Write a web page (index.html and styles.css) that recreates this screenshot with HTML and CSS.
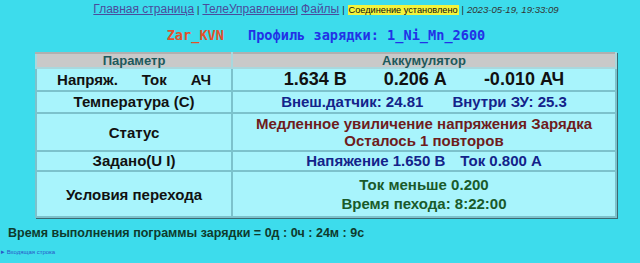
FILE: index.html
```html
<!DOCTYPE html>
<html lang="ru">
<head>
<meta charset="utf-8">
<title>Zar_KVN</title>
<link rel="stylesheet" href="styles.css">
</head>
<body>
<div class="center">
  <div class="nav">
    <a href="#">Главная страница</a><span class="sep">|</span><a href="#">ТелеУправление</a><span class="sep sep-tight">|</span><a href="#">Файлы</a><span class="sep">|</span><span class="status-badge">Соединение установлено</span><span class="sep">|</span><span class="date">2023-05-19, 19:33:09</span>
  </div>
  <div class="title"><span class="dev">Zar_KVN</span><span class="profile">Профиль зарядки: 1_Ni_Mn_2600</span></div>
  <table class="tbl">
    <tr class="head"><th class="c1">Параметр</th><th>Аккумулятор</th></tr>
    <tr class="r1"><td class="lbl"><span class="trio"><span>Напряж.</span><span>Ток</span><span>АЧ</span></span></td><td class="big"><span class="trio wide"><span>1.634 В</span><span>0.206 А</span><span>-0.010 АЧ</span></span></td></tr>
    <tr class="r2"><td class="lbl">Температура (С)</td><td class="navy"><span class="trio mid"><span>Внеш.датчик: 24.81</span><span>Внутри ЗУ: 25.3</span></span></td></tr>
    <tr class="r3"><td class="lbl">Статус</td><td class="red">Медленное увиличение напряжения Зарядка<br>Осталось 1 повторов</td></tr>
    <tr class="r4"><td class="lbl">Задано(U I)</td><td class="navy"><span class="trio small"><span>Напяжение 1.650 В</span><span>Ток 0.800 А</span></span></td></tr>
    <tr class="r5"><td class="lbl">Условия перехода</td><td class="green">Ток меньше 0.200<br>Время пехода: 8:22:00</td></tr>
  </table>
</div>
<div class="runtime">Время выполнения пограммы зарядки = 0д : 0ч : 24м : 9с</div>
<div class="incoming"><span class="tri">&#9656;</span> Входящая строка</div>
</body>
</html>
```
FILE: styles.css
```css
html, body {
  margin: 0;
  padding: 0;
  background: #3ddcec;
  font-family: "Liberation Sans", Arial, sans-serif;
}
body {
  width: 640px;
  height: 263px;
  overflow: hidden;
}
.center {
  padding-left: 12px;
  display: flex;
  flex-direction: column;
  align-items: center;
}
.nav {
  margin-top: 1px;
  height: 16px;
  line-height: 16px;
  font-size: 12px;
  color: #222;
  white-space: nowrap;
}
.nav a {
  color: #4a4c9c;
  text-decoration: underline;
}
.sep {
  font-size: 9px;
  margin: 0 3px;
  color: #222;
}
.sep-tight { margin-left: 0; }
.status-badge {
  font-size: 9.2px;
  background: #f4f43c;
  color: #111;
  padding: 0 1px;
}
.date {
  font-size: 9.6px;
  font-style: italic;
  color: #333;
}
.title {
  margin-top: 9px;
  height: 22px;
  line-height: 18px;
  font-family: "DejaVu Sans Mono", "Liberation Mono", monospace;
  font-size: 13.6px;
  font-weight: bold;
  white-space: nowrap;
}
.dev { color: #e2502a; margin-right: 24px; }
.profile { color: #2232e6; }
.tbl {
  margin-top: 4px;
  width: 582px;
  border-collapse: collapse;
  border: 2px solid #5e9098;
  box-shadow: 1px 1px 0 #3a6a72;
}
.tbl th, .tbl td {
  border: 2px solid #7cc2cc;
  padding: 0 2px;
  text-align: center;
  font-weight: bold;
}
.tbl th {
  background: #c9c9c9;
  color: #1e5a5c;
  font-size: 13px;
  height: 13px;
  line-height: 13px;
  border-color: #a8d8de;
  border-top: 2px solid #b0b0b0;
}
.tbl th.c1 { width: 190px; }
.tbl td {
  background: #a8f4fc;
  font-size: 15px;
  color: #111;
}
.r1 td { height: 21px; line-height: 21px; }
.r2 td { height: 20px; line-height: 20px; }
.r3 td { height: 36px; line-height: 17px; }
.r4 td { height: 18px; line-height: 18px; }
.r5 td { height: 44px; line-height: 19px; }
.lbl { color: #111; }
.big { font-size: 18px !important; }
.navy { color: #13238a !important; }
.red { color: #6e1c1c !important; }
.green { color: #1a5a2a !important; }
.trio {
  display: inline-flex;
  gap: 24px;
  white-space: nowrap;
}
.trio.wide { gap: 37px; }
.trio.mid { gap: 29px; }
.trio.small { gap: 15px; }
.runtime {
  margin: 6px 0 0 8px;
  font-size: 12.5px;
  font-weight: bold;
  color: #0e3a2c;
  height: 18px;
  line-height: 18px;
}
.incoming {
  margin: 5px 0 0 1px;
  font-size: 6px;
  color: #2a56c8;
  height: 10px;
  line-height: 10px;
}
.tri { font-size: 7px; }
```
